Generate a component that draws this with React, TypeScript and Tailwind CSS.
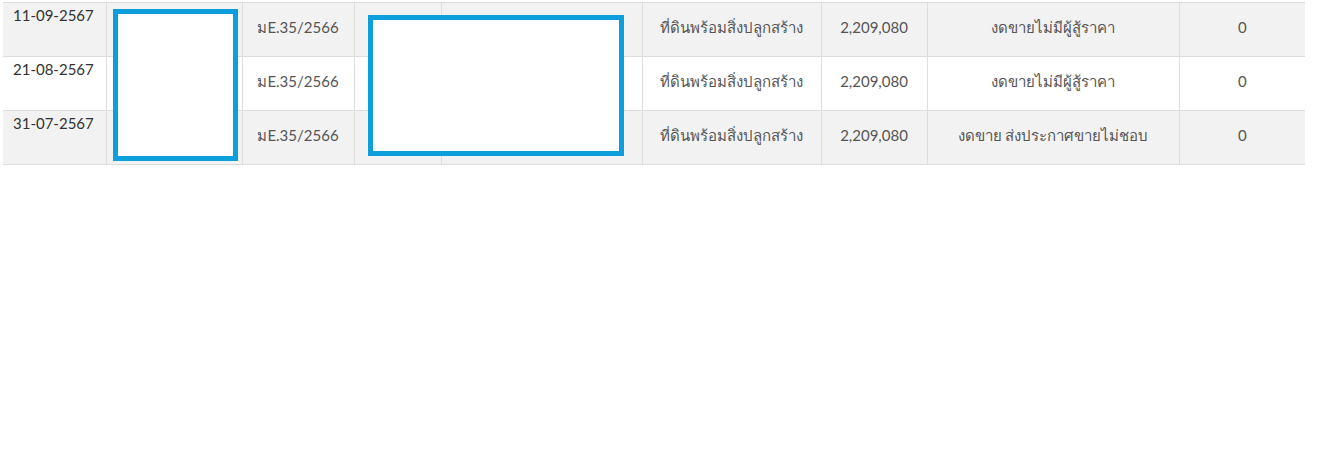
import React from 'react';

interface SaleRow {
  date: string;
  caseNo: string;
  assetType: string;
  price: string;
  result: string;
  count: string;
}

const rows: SaleRow[] = [
  { date: '11-09-2567', caseNo: 'มE.35/2566', assetType: 'ที่ดินพร้อมสิ่งปลูกสร้าง', price: '2,209,080', result: 'งดขายไม่มีผู้สู้ราคา', count: '0' },
  { date: '21-08-2567', caseNo: 'มE.35/2566', assetType: 'ที่ดินพร้อมสิ่งปลูกสร้าง', price: '2,209,080', result: 'งดขายไม่มีผู้สู้ราคา', count: '0' },
  { date: '31-07-2567', caseNo: 'มE.35/2566', assetType: 'ที่ดินพร้อมสิ่งปลูกสร้าง', price: '2,209,080', result: 'งดขาย ส่งประกาศขายไม่ชอบ', count: '0' },
];

const cell = 'border border-[#dddddd] align-middle text-center leading-[21px] pb-[4px]';

export default function App() {
  return (
    <div className="min-h-[459px] w-[1321px] bg-white font-['Lato','Noto_Sans',sans-serif] text-[15px] text-[#555555]">
      <div className="relative pl-[3px] pt-[2px]">
        <table className="w-[1302px] table-fixed border-collapse">
          <colgroup>
            <col className="w-[103px]" />
            <col className="w-[136px]" />
            <col className="w-[112px]" />
            <col className="w-[87px]" />
            <col className="w-[201px]" />
            <col className="w-[179px]" />
            <col className="w-[106px]" />
            <col className="w-[252px]" />
            <col className="w-[126px]" />
          </colgroup>
          <tbody>
            {rows.map((r, i) => (
              <tr key={r.date} className={`h-[54px] ${i % 2 === 0 ? 'bg-[#f2f2f2]' : 'bg-white'}`}>
                <td className="border border-[#dddddd] border-l-0 pl-[10px] pt-[2px] align-top text-[#333333] leading-[21px]">{r.date}</td>
                <td className={cell}></td>
                <td className={cell}>{r.caseNo}</td>
                <td className={cell}></td>
                <td className={cell}></td>
                <td className={cell}>{r.assetType}</td>
                <td className={cell}>{r.price}</td>
                <td className={cell}>{r.result}</td>
                <td className={`${cell} border-r-0`}>{r.count}</td>
              </tr>
            ))}
          </tbody>
        </table>
        {/* redaction boxes */}
        <div className="absolute left-[113px] top-[9px] h-[152px] w-[125px] border-[5px] border-[#0d9fdb] bg-white" />
        <div className="absolute left-[368px] top-[15px] h-[141px] w-[256px] border-[5px] border-[#0d9fdb] bg-white" />
      </div>
    </div>
  );
}
